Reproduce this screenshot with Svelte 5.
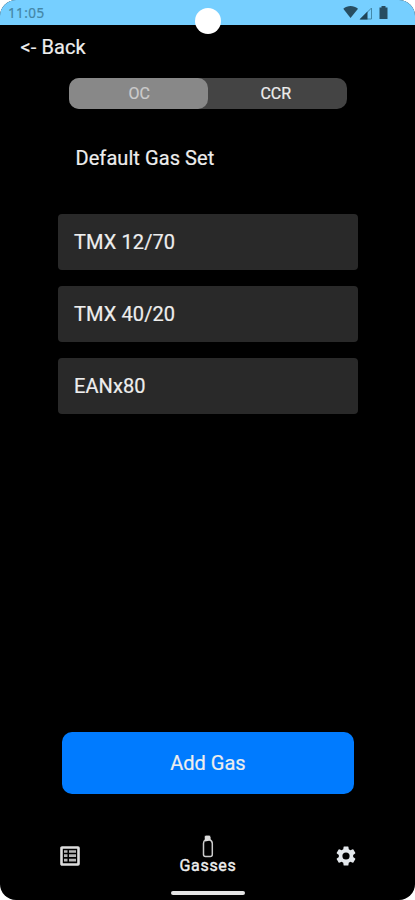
<script>
  const gases = ['TMX 12/70', 'TMX 40/20', 'EANx80'];
  let mode = $state('OC');
</script>

<div class="screen">
  <header class="status">
    <span class="time">11:05</span>
    <svg class="signals" width="46" height="16" viewBox="0 0 46 16" aria-hidden="true">
      <path d="M.3 3.700C4.500.1 10.500.1 15 3.700L7.500 13Z" fill="#274d61" />
      <path d="M28.500 3V14H17.500Z" fill="none" stroke="#4389aa" />
      <path d="M24.500 6.500V14.500H16.500Z" fill="#204457" />
      <path d="M36.500 2.500H38.500V1H42.500V2.500H44.500V14H36.500Z" fill="#274d61" />
    </svg>
  </header>
  <div class="camera"></div>

  <button class="back">&lt;- Back</button>

  <div class="segments">
    {#each ['OC', 'CCR'] as item}
      <button class:active={mode === item} onclick={() => (mode = item)}>{item}</button>
    {/each}
  </div>

  <h1>Default Gas Set</h1>

  <ul>
    {#each gases as gas}
      <li>{gas}</li>
    {/each}
  </ul>

  <button class="add">Add Gas</button>

  <nav>
    <button class="tab" aria-label="List">
      <svg class="list" width="20" height="20" viewBox="0 0 20 20">
        <rect x="1.500" y="1.500" width="17" height="17" rx=".5" fill="none" stroke="#dedede" stroke-width="2.600" />
        <path d="M4 5.500H7.500M9 5.500H16M4 9.700H7.500M9 9.700H16M4 14.200H7.500M9 14.200H16" stroke="#b5b5b5" stroke-width="2.700" />
      </svg>
    </button>
    <button class="tab current">
      <svg class="bottle" width="12" height="23" viewBox="0 0 12 23" aria-hidden="true">
        <path d="M3.500 1.500H7.500V4.500C9.500 5.500 10.300 6.600 10.300 8.500V19.500Q10.300 21.500 8.300 21.500H3.500Q1.500 21.500 1.500 19.500V8.500C1.500 6.600 2.100 5.500 3.500 4.500Z" fill="none" stroke="#ccc" stroke-width="1.500" />
        <path d="M4 .8H7.300L8.500 2.500V5.500L3 6.500V2.500Z" fill="#ddd" />
      </svg>
      <span>Gasses</span>
    </button>
    <button class="tab" aria-label="Settings">
      <svg width="24" height="24" viewBox="0 0 24 24">
        <path fill="#e4e8ec" d="M19.140 12.940c.04-.3.060-.61.060-.94s-.02-.64-.07-.94l2.030-1.580a.49.490 0 0 0 .12-.61l-1.920-3.320a.488.488 0 0 0-.59-.22l-2.390.96c-.5-.38-1.030-.7-1.620-.94L14.400 2.810a.484.484 0 0 0-.48-.41h-3.840a.47.470 0 0 0-.47.410L9.250 5.350c-.59.24-1.130.57-1.620.94l-2.390-.96a.47.470 0 0 0-.59.220L2.740 8.870a.48.480 0 0 0 .12.610l2.030 1.580c-.05.3-.09.630-.09.940s.02.640.07.940l-2.030 1.580a.49.490 0 0 0-.12.610l1.920 3.320c.12.220.37.290.59.220l2.390-.96c.5.380 1.030.7 1.620.94l.36 2.540c.05.240.24.410.48.410h3.840c.24 0 .44-.17.470-.41l.36-2.540c.59-.24 1.130-.56 1.620-.94l2.390.96c.22.080.47 0 .59-.22l1.920-3.320a.47.470 0 0 0-.12-.61zM12 15.600A3.600 3.600 0 1 1 12 8.400a3.600 3.600 0 0 1 0 7.200z" />
      </svg>
    </button>
  </nav>
  <div class="home"></div>
</div>

<style>
  :global(body) {
    margin: 0;
    background: #fff;
  }
  .screen {
    position: relative;
    display: flex;
    flex-direction: column;
    box-sizing: border-box;
    width: 415px;
    height: 900px;
    overflow: hidden;
    border-radius: 16px;
    background: #000;
    color: #eee;
    font-family: Roboto, sans-serif;
    -webkit-text-stroke: 0.2px currentColor;
  }
  button {
    padding: 0;
    border: 0;
    background: none;
    color: inherit;
    font: inherit;
  }
  .status {
    display: flex;
    flex: none;
    justify-content: space-between;
    box-sizing: border-box;
    height: 25px;
    padding: 5px 26px 0 8px;
    background: #76cfff;
  }
  .time {
    color: #4486a6;
    font: 13.5px/17px "Noto Sans", sans-serif;
    letter-spacing: 0.4px;
  }
  .camera {
    position: absolute;
    top: 8px;
    left: 195px;
    width: 26px;
    height: 26px;
    border-radius: 50%;
    background: #fff;
  }
  .back {
    align-self: flex-start;
    height: 24px;
    margin: 10px 0 0 20.500px;
    font-size: 20px;
    line-height: 24px;
    letter-spacing: 0.1px;
  }
  .segments {
    display: flex;
    flex: none;
    width: 278px;
    height: 31px;
    margin: 19px 0 0 69px;
    border-radius: 10px;
    background: #444;
    font-size: 16px;
  }
  .segments button {
    flex: 1;
    padding-right: 3px;
    border-radius: 10px;
  }
  .segments .active {
    padding: 0 0 0 2px;
    background: #888;
    color: #ccc;
  }
  h1 {
    margin: 37px 0 0 75.500px;
    font-size: 20px;
    font-weight: 400;
    line-height: 24px;
    letter-spacing: 0.07px;
  }
  ul {
    display: flex;
    flex-direction: column;
    gap: 16px;
    width: 300px;
    margin: 43.500px 0 0 58px;
    padding: 0;
    list-style: none;
  }
  li {
    box-sizing: border-box;
    height: 56.200px;
    padding-left: 16px;
    border-radius: 4px;
    background: #292929;
    font-size: 20px;
    line-height: 57px;
    letter-spacing: 0.1px;
  }
  .add {
    flex: none;
    width: 292px;
    height: 62px;
    margin: auto 0 0 62px;
    border-radius: 10px;
    background: #007bff;
    font-size: 20px;
  }
  nav {
    display: flex;
    flex: none;
    height: 50px;
    margin-top: 37px;
  }
  .tab {
    display: flex;
    flex: 1;
    flex-direction: column;
    align-items: center;
    justify-content: center;
  }
  .list {
    margin-left: 1px;
  }
  .bottle {
    margin-left: 1px;
  }
  .current {
    justify-content: flex-start;
    padding-top: 4px;
    font-size: 16px;
    line-height: 16px;
    letter-spacing: 0.7px;
    -webkit-text-stroke: 0.4px currentColor;
  }
  .current span {
    margin-left: 1px;
  }
  .home {
    flex: none;
    width: 74px;
    height: 4px;
    margin: 10px auto 5px;
    border-radius: 2px;
    background: #e4e4e4;
  }
</style>
